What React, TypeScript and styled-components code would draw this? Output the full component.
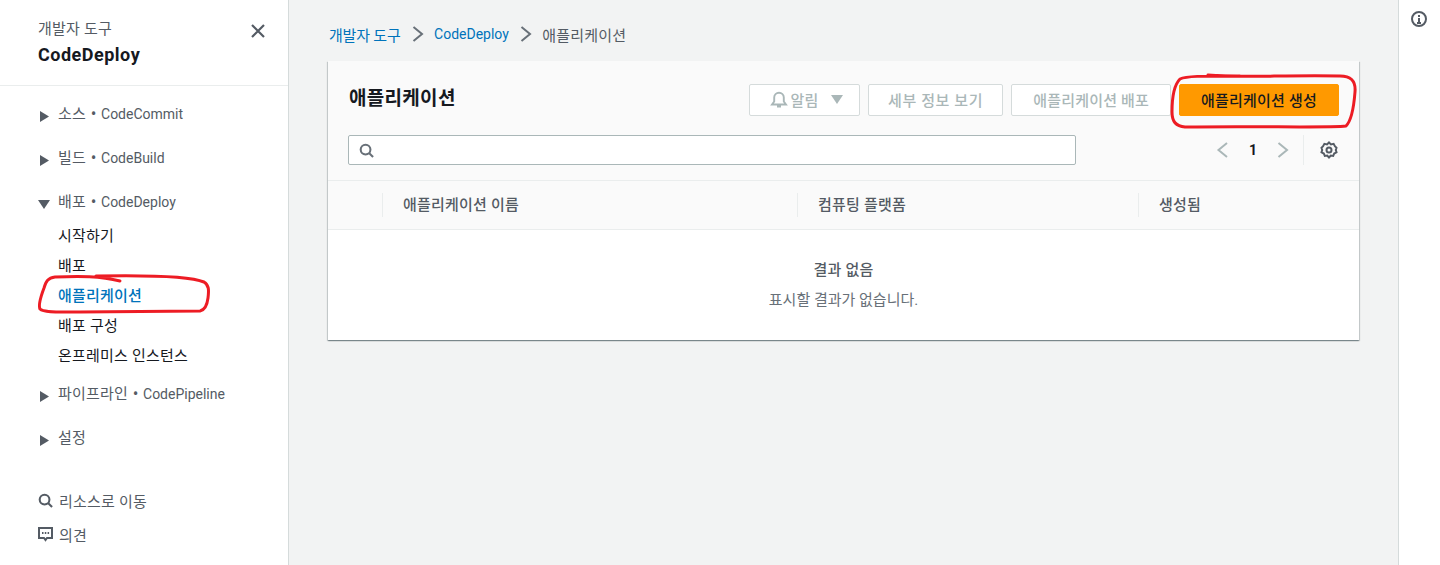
import styled, { createGlobalStyle, css } from "styled-components";

const GlobalStyle = createGlobalStyle`
  html, body { margin: 0; padding: 0; height: 100%; overflow: hidden; }
  body {
    font-family: Roboto, "Noto Sans CJK KR", sans-serif;
    font-size: 14px;
    color: #16191f;
    background: #f2f3f3;
  }
`;

// hangul in the reference runs wider than latin at the same size
const hangul = css`
  font-size: 15px;
  letter-spacing: 0.2px;
`;

const Ko = styled.span`
  ${hangul}
`;

const Page = styled.div`
  position: relative;
  display: flex;
  width: 1440px;
  height: 565px;
  overflow: hidden;
`;

const Sidebar = styled.aside`
  flex: 0 0 289px;
  box-sizing: border-box;
  display: flex;
  flex-direction: column;
  background: #fff;
  border-right: 1px solid #d5dbdb;
`;

const SideHeader = styled.div`
  display: flex;
  justify-content: space-between;
  height: 86px;
  box-sizing: border-box;
  padding: 19px 21px 0 38px;
  border-bottom: 1px solid #eaeded;
`;

const SideTitle = styled.div`
  display: flex;
  flex-direction: column;
`;

const SideEyebrow = styled.span`
  ${hangul}
  line-height: 20px;
  color: #545b64;
`;

const SideName = styled.span`
  font-size: 18px;
  letter-spacing: 0.5px;
  line-height: 24px;
  margin-top: 4px;
  font-weight: 700;
  color: #16191f;
`;

const CloseButton = styled.span`
  display: flex;
  height: 18px;
  margin-top: 3px;
  color: #545b64;
`;

const Nav = styled.nav`
  display: flex;
  flex-direction: column;
  padding: 15px 0 0 38px;
`;

const Section = styled.div`
  display: flex;
  align-items: center;
  height: 22px;
  margin-bottom: 22px;
  color: #545b64;
`;

const Arrow = styled.span`
  display: flex;
  width: 20px;
  flex: none;
  padding-top: 7px;
  color: #545b64;
`;

const Bullet = styled.span`
  display: inline-block;
  width: 15px;
  text-align: center;
  font-family: "Noto Sans", sans-serif;
  font-size: 15px;
  line-height: 1;
`;

const NavSub = styled.div`
  display: flex;
  flex-direction: column;
  margin: -12px 0 10px 20px;
`;

const NavLink = styled.a<{ $active?: boolean }>`
  ${hangul}
  height: 30px;
  line-height: 30px;
  color: ${({ $active }) => ($active ? "#0073bb" : "#16191f")};
  font-weight: ${({ $active }) => ($active ? 500 : 400)};
`;

const Bottom = styled.div`
  display: flex;
  flex-direction: column;
  gap: 14px;
  margin-top: 21px;
  padding-left: 38px;
`;

const BottomRow = styled.div`
  ${hangul}
  display: flex;
  align-items: center;
  gap: 6px;
  height: 20px;
  color: #545b64;
`;

const Main = styled.main`
  flex: 1;
  min-width: 0;
  box-sizing: border-box;
  padding: 24px 39px 0 39px;
`;

const Crumbs = styled.div`
  display: flex;
  align-items: center;
  height: 20px;
  margin-bottom: 17px;
  padding-left: 1px;
  color: #545b64;
`;

const Crumb = styled.a`
  color: #0073bb;
`;

const CrumbRoot = styled(Ko)`
  letter-spacing: -0.2px;
`;

const CrumbSep = styled.span`
  display: flex;
  margin: 0 8.5px 0 9px;
  color: #687078;
`;

const Card = styled.section`
  background: #fff;
  box-shadow: 0 1px 1px 0 rgba(0, 28, 36, 0.3), 1px 1px 1px 0 rgba(0, 28, 36, 0.15),
    -1px 1px 1px 0 rgba(0, 28, 36, 0.15);
`;

const CardHead = styled.div`
  background: #fafafa;
  box-sizing: border-box;
  height: 120px;
  padding: 23px 20px 0 20px;
  border-bottom: 1px solid #eaeded;
`;

const HeadRow = styled.div`
  display: flex;
  justify-content: space-between;
  align-items: flex-start;
`;

const Title = styled.h1`
  margin: 2px 0 0 1px;
  font-size: 19px;
  letter-spacing: 0.3px;
  line-height: 26px;
  font-weight: 700;
  color: #16191f;
`;

const Actions = styled.div`
  display: flex;
  gap: 8px;
`;

const Button = styled.button<{ $primary?: boolean }>`
  ${hangul}
  display: flex;
  align-items: center;
  justify-content: center;
  gap: 3px;
  height: 32px;
  box-sizing: border-box;
  border-radius: 2px;
  font-family: inherit;
  font-weight: 500;
  padding: 0 21px 2px;
  border: 1px solid ${({ $primary }) => ($primary ? "#ff9900" : "#d5dbdb")};
  background: ${({ $primary }) => ($primary ? "#ff9900" : "#fff")};
  color: ${({ $primary }) => ($primary ? "#16191f" : "#aab7b8")};
`;

const AlertButton = styled(Button)`
  width: 111px;
  padding: 0 0 2px 3px;
`;

const DetailButton = styled(Button)`
  letter-spacing: 0.6px;
  padding: 0 19px 2px;
`;

const Toolbar = styled.div`
  display: flex;
  align-items: center;
  margin-top: 19px;
`;

const SearchBox = styled.div`
  display: flex;
  align-items: center;
  box-sizing: border-box;
  width: 728px;
  height: 30px;
  padding-left: 10px;
  background: #fff;
  border: 1px solid #aab7b8;
  border-radius: 2px;
  color: #687078;
`;

const Pager = styled.div`
  display: flex;
  align-items: center;
  margin-left: auto;
  margin-right: 1px;
`;

const PagerArrow = styled.span`
  display: flex;
  color: #aab7b8;
`;

const PageNum = styled.span`
  width: 44px;
  text-align: center;
  font-weight: 700;
  font-size: 14px;
`;

const SettingsCell = styled.span`
  display: flex;
  align-items: center;
  height: 30px;
  margin-left: 12px;
  padding-left: 16px;
  border-left: 1px solid #eaeded;
  color: #545b64;
`;

const TableHead = styled.div`
  display: grid;
  grid-template-columns: 54px 415px 341px 1fr;
  align-items: center;
  height: 49px;
  box-sizing: border-box;
  background: #fafafa;
  border-bottom: 1px solid #eaeded;
`;

const Th = styled.div<{ $first?: boolean }>`
  ${hangul}
  height: 24px;
  line-height: 24px;
  box-sizing: border-box;
  padding-left: 20px;
  color: #545b64;
  font-weight: 500;
  border-left: ${({ $first }) => ($first ? "none" : "1px solid #eaeded")};
`;

const Empty = styled.div`
  display: flex;
  flex-direction: column;
  align-items: center;
  height: 110px;
  padding-top: 30px;
  box-sizing: border-box;
`;

const EmptyTitle = styled.div`
  ${hangul}
  line-height: 20px;
  font-weight: 500;
  color: #545b64;
`;

const EmptyText = styled.div`
  font-size: 15px;
  margin-top: 10px;
  line-height: 20px;
  color: #687078;
`;

const Rail = styled.aside`
  flex: 0 0 42px;
  box-sizing: border-box;
  display: flex;
  justify-content: center;
  padding: 11px 2px 0 0;
  background: #fff;
  border-left: 1px solid #d5dbdb;
  color: #545b64;
`;

const Scribble = styled.svg`
  position: absolute;
  inset: 0;
  pointer-events: none;
`;

const Triangle = ({ down }: { down?: boolean }) => (
  <svg width="12" height="12" viewBox="0 0 12 12" fill="currentColor">
    {down ? <path d="M0 2h12L6 11z" /> : <path d="M2 1l9 5.5L2 12z" />}
  </svg>
);

const Chevron = ({ flip }: { flip?: boolean }) => (
  <svg width="16" height="16" viewBox="0 0 16 16" fill="none" stroke="currentColor" strokeWidth="2">
    <path d={flip ? "M12 1L3.5 8l8.5 7" : "M3.5 1L12 8l-8.5 7"} />
  </svg>
);

const SearchIcon = () => (
  <svg width="15" height="15" viewBox="0 0 16 16" fill="none" stroke="currentColor" strokeWidth="2.2">
    <circle cx="7" cy="7" r="5.2" />
    <path d="M10.7 10.7L15 15" />
  </svg>
);

const subLinks = ["시작하기", "배포", "애플리케이션", "배포 구성", "온프레미스 인스턴스"];

function NavSection({ label, service, down }: { label: string; service?: string; down?: boolean }) {
  return (
    <Section>
      <Arrow><Triangle down={down} /></Arrow>
      <span>
        <Ko>{label}</Ko>
        {service ? <><Bullet>•</Bullet>{service}</> : null}
      </span>
    </Section>
  );
}

export default function App() {
  return (
    <Page>
      <GlobalStyle />
      <Sidebar>
        <SideHeader>
          <SideTitle>
            <SideEyebrow>개발자 도구</SideEyebrow>
            <SideName>CodeDeploy</SideName>
          </SideTitle>
          <CloseButton>
            <svg width="18" height="18" viewBox="0 0 18 18" stroke="currentColor" strokeWidth="2.2" fill="none">
              <path d="M3 3l12 12M15 3L3 15" />
            </svg>
          </CloseButton>
        </SideHeader>
        <Nav>
          <NavSection label="소스" service="CodeCommit" />
          <NavSection label="빌드" service="CodeBuild" />
          <NavSection label="배포" service="CodeDeploy" down />
          <NavSub>
            {subLinks.map((l) => (
              <NavLink key={l} $active={l === "애플리케이션"}>{l}</NavLink>
            ))}
          </NavSub>
          <NavSection label="파이프라인" service="CodePipeline" />
          <NavSection label="설정" />
        </Nav>
        <Bottom>
          <BottomRow>
            <SearchIcon />
            리소스로 이동
          </BottomRow>
          <BottomRow>
            <svg width="15" height="16" viewBox="0 0 15 16" fill="none" stroke="currentColor" strokeWidth="2">
              <path d="M1 2h13v10H9l-1.5 2L6 12H1z" />
              <path d="M4 7h1.5M6.8 7h1.5M9.6 7h1.5" />
            </svg>
            의견
          </BottomRow>
        </Bottom>
      </Sidebar>
      <Main>
        <Crumbs>
          <Crumb><CrumbRoot>개발자 도구</CrumbRoot></Crumb>
          <CrumbSep><Chevron /></CrumbSep>
          <Crumb>CodeDeploy</Crumb>
          <CrumbSep><Chevron /></CrumbSep>
          <Ko>애플리케이션</Ko>
        </Crumbs>
        <Card>
          <CardHead>
            <HeadRow>
              <Title>애플리케이션</Title>
              <Actions>
                <AlertButton>
                  <svg width="18" height="18" viewBox="0 0 18 18" fill="none" stroke="currentColor" strokeWidth="1.9">
                    <path d="M2 14.5h14l-2.2-3V7.5a4.8 4.8 0 0 0-9.6 0v4zM7 16.5h4" />
                  </svg>
                  알림
                  <svg width="12" height="10" viewBox="0 0 12 10" fill="currentColor" style={{ marginLeft: 9 }}>
                    <path d="M0 1h12L6 10z" />
                  </svg>
                </AlertButton>
                <DetailButton>세부 정보 보기</DetailButton>
                <Button>애플리케이션 배포</Button>
                <Button $primary>애플리케이션 생성</Button>
              </Actions>
            </HeadRow>
            <Toolbar>
              <SearchBox><SearchIcon /></SearchBox>
              <Pager>
                <PagerArrow><Chevron flip /></PagerArrow>
                <PageNum>1</PageNum>
                <PagerArrow><Chevron /></PagerArrow>
                <SettingsCell>
                  <svg width="18" height="18" viewBox="0 0 18 18" fill="none" stroke="currentColor">
                    <circle cx="9" cy="9" r="2.5" strokeWidth="2" />
                    <path d="M9 1.5l2 1.9 2.6-.6 1.3 2.4 1.6 1.5-.7 2.3.7 2.3-2.3 1.2-1 2.5-2.4-.4L9 16.5l-1.8-1.9-2.4.4-1-2.5L1.5 11.3l.7-2.3-.7-2.3 1.6-1.5 1.3-2.4 2.6.6z" strokeWidth="2" />
                  </svg>
                </SettingsCell>
              </Pager>
            </Toolbar>
          </CardHead>
          <TableHead>
            <Th $first />
            <Th>애플리케이션 이름</Th>
            <Th>컴퓨팅 플랫폼</Th>
            <Th>생성됨</Th>
          </TableHead>
          <Empty>
            <EmptyTitle>결과 없음</EmptyTitle>
            <EmptyText>표시할 결과가 없습니다.</EmptyText>
          </Empty>
        </Card>
      </Main>
      <Rail>
        <svg width="16" height="16" viewBox="0 0 16 16" fill="none" stroke="currentColor" strokeWidth="2">
          <circle cx="8" cy="8" r="7" />
          <path d="M8 7v5M6 12h4M8 4v2" />
        </svg>
      </Rail>
      <Scribble width="1440" height="565" viewBox="0 0 1440 565" fill="none" stroke="#ed1c24" strokeWidth="3" strokeLinecap="round" strokeLinejoin="round">
        <path d="M120 281C100 276 80 276 55 277C48 278 46 281 44 288C41 296 38 305 40 309C44 313 60 312 80 312L200 311C205 310 207 306 208 298C209 290 209 285 204 282C190 276 150 275 96 276" />
        <path d="M1208 75C1240 78 1280 75 1340 76C1350 76 1356 80 1355 92C1354 105 1352 120 1346 126C1330 128 1260 126 1185 127C1176 126 1172 122 1172 112C1172 100 1174 85 1180 79C1186 76 1200 76 1240 76" />
      </Scribble>
    </Page>
  );
}
